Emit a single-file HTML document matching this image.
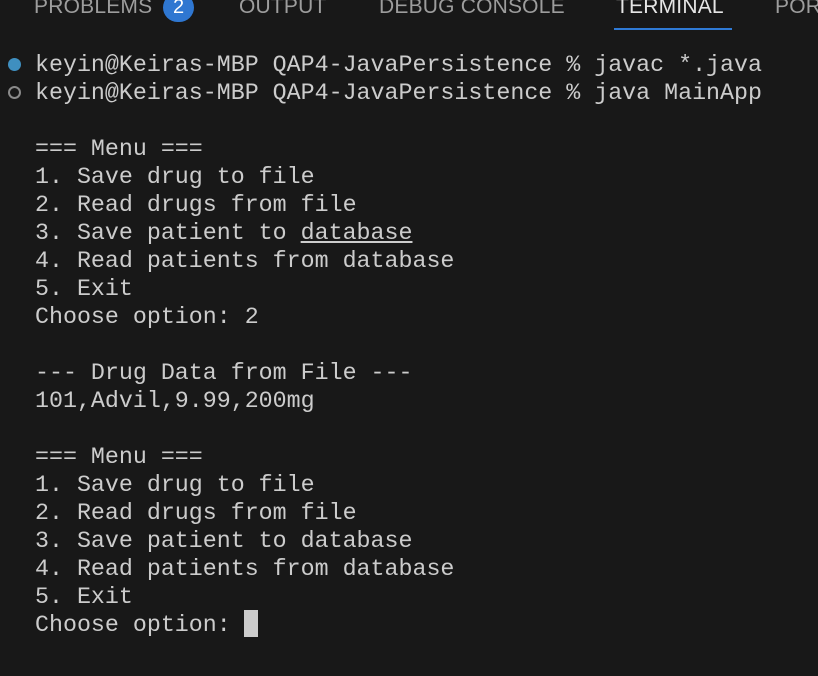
<!DOCTYPE html>
<html><head><style>
html,body{margin:0;padding:0;background:#181818;width:818px;height:676px;overflow:hidden;position:relative}
.tab{position:absolute;top:-5px;font-family:"Liberation Sans",sans-serif;font-size:21px;color:#9d9d9d;letter-spacing:0.2px}
.badge{position:absolute;left:163px;top:-7px;width:31px;height:29px;border-radius:15px;background:#2f77d1;color:#fff;font-family:"Liberation Sans",sans-serif;font-size:20px;text-align:center;line-height:29px}
.ul{position:absolute;left:614px;top:28px;width:118px;height:2px;background:#2f7ad6}
.t{position:absolute;left:35px;font-family:"Liberation Mono",monospace;font-size:23.3px;color:#cccccc;white-space:pre;line-height:28px}
.dot{position:absolute;left:8px;width:13px;height:13px;border-radius:50%}
.cur{position:absolute;left:244px;top:610px;width:14px;height:27px;background:#cccccc}
</style></head><body>
<div class="tab" style="left:34px">PROBLEMS</div>
<div class="badge">2</div>
<div class="tab" style="left:239px">OUTPUT</div>
<div class="tab" style="left:379px">DEBUG CONSOLE</div>
<div class="tab" style="left:616px;color:#e6e6e6">TERMINAL</div>
<div class="tab" style="left:775px">POR</div>
<div class="ul"></div>
<div class="dot" style="top:58px;background:#3f8fc0"></div>
<div class="dot" style="top:86px;border:2px solid #8a8a8a;width:9px;height:9px"></div>
<div class="t" style="top:51px">keyin@Keiras-MBP QAP4-JavaPersistence % javac *.java
keyin@Keiras-MBP QAP4-JavaPersistence % java MainApp

=== Menu ===
1. Save drug to file
2. Read drugs from file
3. Save patient to <span style="text-decoration:underline">database</span>
4. Read patients from database
5. Exit
Choose option: 2

--- Drug Data from File ---
101,Advil,9.99,200mg

=== Menu ===
1. Save drug to file
2. Read drugs from file
3. Save patient to database
4. Read patients from database
5. Exit
Choose option: </div>
<div class="cur"></div>
</body></html>
